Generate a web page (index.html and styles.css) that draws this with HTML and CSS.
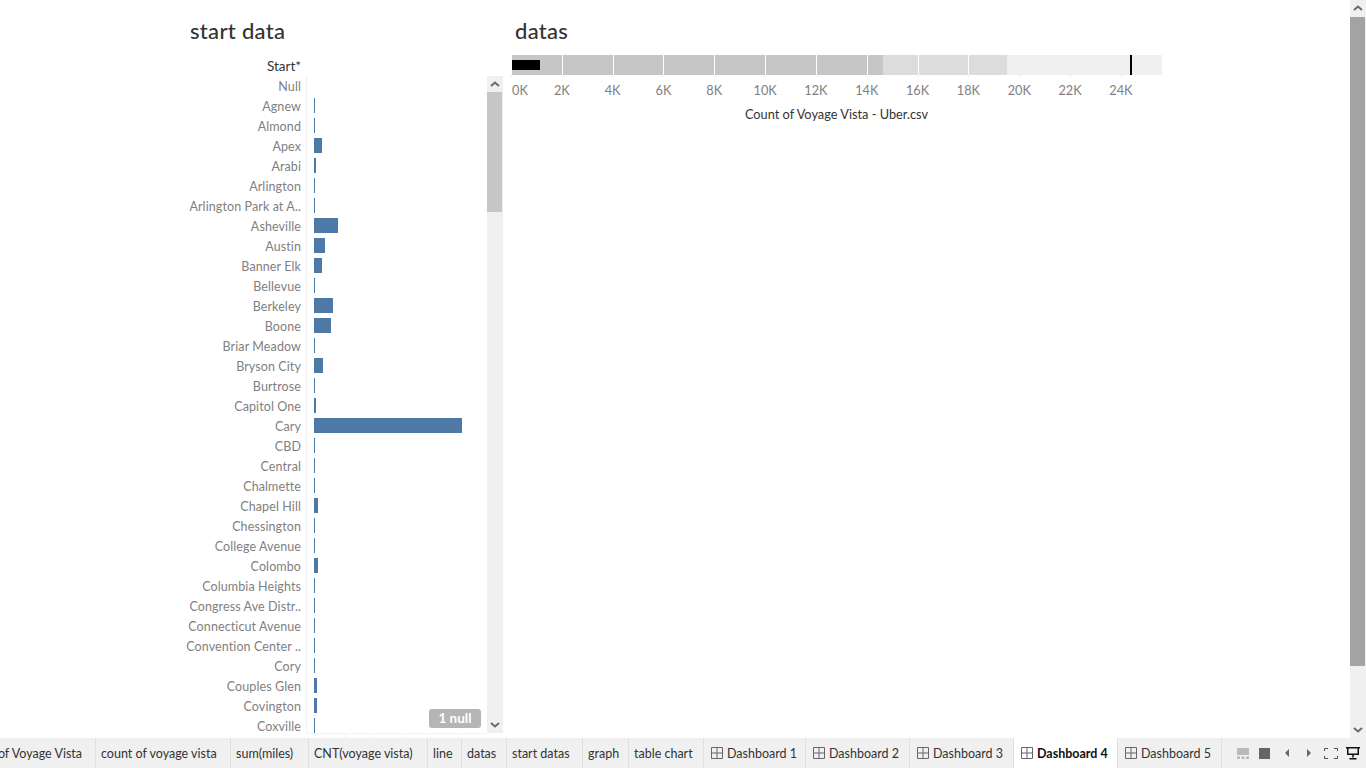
FILE: index.html
```html
<!DOCTYPE html>
<html lang="en">
<head>
<meta charset="UTF-8">
<meta name="viewport" content="width=device-width, initial-scale=1.0">
<title>Dashboard 4</title>
<link rel="stylesheet" href="styles.css">
</head>
<body>

<div class="workspace">
  <div class="dashboard">

    <section class="start-panel">
      <h2 class="sheet-title start-title">start data</h2>
      <div class="field-header">Start*</div>
      <div class="chart-wrap">
        <div class="chart-rows">
          <div class="row"><span class="row-label">Null</span><span class="row-bar"></span></div>
          <div class="row"><span class="row-label">Agnew</span><span class="row-bar"><i class="bar" style="width:1px"></i></span></div>
          <div class="row"><span class="row-label">Almond</span><span class="row-bar"><i class="bar" style="width:1px"></i></span></div>
          <div class="row"><span class="row-label">Apex</span><span class="row-bar"><i class="bar" style="width:8px"></i></span></div>
          <div class="row"><span class="row-label">Arabi</span><span class="row-bar"><i class="bar" style="width:2px"></i></span></div>
          <div class="row"><span class="row-label">Arlington</span><span class="row-bar"><i class="bar" style="width:1px"></i></span></div>
          <div class="row"><span class="row-label">Arlington Park at A..</span><span class="row-bar"><i class="bar" style="width:1px"></i></span></div>
          <div class="row"><span class="row-label">Asheville</span><span class="row-bar"><i class="bar" style="width:24px"></i></span></div>
          <div class="row"><span class="row-label">Austin</span><span class="row-bar"><i class="bar" style="width:11px"></i></span></div>
          <div class="row"><span class="row-label">Banner Elk</span><span class="row-bar"><i class="bar" style="width:8px"></i></span></div>
          <div class="row"><span class="row-label">Bellevue</span><span class="row-bar"><i class="bar" style="width:1px"></i></span></div>
          <div class="row"><span class="row-label">Berkeley</span><span class="row-bar"><i class="bar" style="width:19px"></i></span></div>
          <div class="row"><span class="row-label">Boone</span><span class="row-bar"><i class="bar" style="width:17px"></i></span></div>
          <div class="row"><span class="row-label">Briar Meadow</span><span class="row-bar"><i class="bar" style="width:1px"></i></span></div>
          <div class="row"><span class="row-label">Bryson City</span><span class="row-bar"><i class="bar" style="width:9px"></i></span></div>
          <div class="row"><span class="row-label">Burtrose</span><span class="row-bar"><i class="bar" style="width:1px"></i></span></div>
          <div class="row"><span class="row-label">Capitol One</span><span class="row-bar"><i class="bar" style="width:2px"></i></span></div>
          <div class="row"><span class="row-label">Cary</span><span class="row-bar"><i class="bar" style="width:148px"></i></span></div>
          <div class="row"><span class="row-label">CBD</span><span class="row-bar"><i class="bar" style="width:1px"></i></span></div>
          <div class="row"><span class="row-label">Central</span><span class="row-bar"><i class="bar" style="width:1px"></i></span></div>
          <div class="row"><span class="row-label">Chalmette</span><span class="row-bar"><i class="bar" style="width:1px"></i></span></div>
          <div class="row"><span class="row-label">Chapel Hill</span><span class="row-bar"><i class="bar" style="width:4px"></i></span></div>
          <div class="row"><span class="row-label">Chessington</span><span class="row-bar"><i class="bar" style="width:1px"></i></span></div>
          <div class="row"><span class="row-label">College Avenue</span><span class="row-bar"><i class="bar" style="width:1px"></i></span></div>
          <div class="row"><span class="row-label">Colombo</span><span class="row-bar"><i class="bar" style="width:4px"></i></span></div>
          <div class="row"><span class="row-label">Columbia Heights</span><span class="row-bar"><i class="bar" style="width:1px"></i></span></div>
          <div class="row"><span class="row-label">Congress Ave Distr..</span><span class="row-bar"><i class="bar" style="width:1px"></i></span></div>
          <div class="row"><span class="row-label">Connecticut Avenue</span><span class="row-bar"><i class="bar" style="width:1px"></i></span></div>
          <div class="row"><span class="row-label">Convention Center ..</span><span class="row-bar"><i class="bar" style="width:1px"></i></span></div>
          <div class="row"><span class="row-label">Cory</span><span class="row-bar"><i class="bar" style="width:1px"></i></span></div>
          <div class="row"><span class="row-label">Couples Glen</span><span class="row-bar"><i class="bar" style="width:3px"></i></span></div>
          <div class="row"><span class="row-label">Covington</span><span class="row-bar"><i class="bar" style="width:3px"></i></span></div>
          <div class="row"><span class="row-label">Coxville</span><span class="row-bar"><i class="bar" style="width:1px"></i></span></div>
        </div>
        <div class="null-badge">1 null</div>
        <div class="scrollbar chart-scroll">
          <span class="scroll-btn"><svg width="10" height="6" viewBox="0 0 10 6"><path d="M1 5 L5 1.500 L9 5" fill="none" stroke="#6a6a6a" stroke-width="2"/></svg></span>
          <span class="scroll-thumb"></span>
          <span class="scroll-track"></span>
          <span class="scroll-btn"><svg width="10" height="6" viewBox="0 0 10 6"><path d="M1 1 L5 4.500 L9 1" fill="none" stroke="#6a6a6a" stroke-width="2"/></svg></span>
        </div>
      </div>
      <div class="axis-stubs"><i></i><i></i><i></i><i></i><i></i></div>
    </section>

    <section class="datas-panel">
      <h2 class="sheet-title datas-title">datas</h2>
      <div class="bullet">
        <div class="band band-dark"></div>
        <div class="band band-mid"></div>
        <div class="band band-light"></div>
        <div class="gridlines">
          <i></i><i></i><i></i><i></i><i></i><i></i><i></i><i></i><i></i><i></i>
        </div>
        <div class="measure"></div>
        <div class="ref-line"></div>
      </div>
      <div class="axis-ticks">
        <i></i><i></i><i></i><i></i><i></i><i></i><i></i><i></i><i></i><i></i><i></i><i></i><i></i>
      </div>
      <div class="axis-labels">
        <span class="tick-first">0K</span>
        <span>2K</span><span>4K</span><span>6K</span><span>8K</span><span>10K</span><span>12K</span>
        <span>14K</span><span>16K</span><span>18K</span><span>20K</span><span>22K</span><span>24K</span>
      </div>
      <div class="axis-title">Count of Voyage Vista - Uber.csv</div>
    </section>

  </div>

  <div class="scrollbar page-scroll">
    <span class="scroll-btn"><svg width="10" height="6" viewBox="0 0 10 6"><path d="M1 5 L5 1.500 L9 5" fill="none" stroke="#6a6a6a" stroke-width="2"/></svg></span>
    <span class="scroll-thumb"></span>
    <span class="scroll-track"></span>
    <span class="scroll-btn"><svg width="10" height="6" viewBox="0 0 10 6"><path d="M1 1 L5 4.500 L9 1" fill="none" stroke="#6a6a6a" stroke-width="2"/></svg></span>
  </div>
</div>

<div class="tabbar">
  <div class="tab tab-clipped" style="width:96px">Count of Voyage Vista</div>
  <div class="tab" style="width:135px">count of voyage vista</div>
  <div class="tab" style="width:78px">sum(miles)</div>
  <div class="tab" style="width:119px">CNT(voyage vista)</div>
  <div class="tab" style="width:34px">line</div>
  <div class="tab" style="width:45px">datas</div>
  <div class="tab" style="width:76px">start datas</div>
  <div class="tab" style="width:46px">graph</div>
  <div class="tab" style="width:75px">table chart</div>
  <div class="tab dash-tab" style="width:102px"><svg class="grid-icon" width="12" height="12" viewBox="0 0 12 12"><path d="M.5.5h11v11H.5zM6 .5v11M.5 6h11" fill="none" stroke="#666"/></svg>Dashboard 1</div>
  <div class="tab dash-tab" style="width:104px"><svg class="grid-icon" width="12" height="12" viewBox="0 0 12 12"><path d="M.5.5h11v11H.5zM6 .5v11M.5 6h11" fill="none" stroke="#666"/></svg>Dashboard 2</div>
  <div class="tab dash-tab" style="width:104px"><svg class="grid-icon" width="12" height="12" viewBox="0 0 12 12"><path d="M.5.5h11v11H.5zM6 .5v11M.5 6h11" fill="none" stroke="#666"/></svg>Dashboard 3</div>
  <div class="tab dash-tab tab-active" style="width:104px"><svg class="grid-icon" width="12" height="12" viewBox="0 0 12 12"><path d="M.5.5h11v11H.5zM6 .5v11M.5 6h11" fill="none" stroke="#666"/></svg>Dashboard 4</div>
  <div class="tab dash-tab" style="width:104px"><svg class="grid-icon" width="12" height="12" viewBox="0 0 12 12"><path d="M.5.5h11v11H.5zM6 .5v11M.5 6h11" fill="none" stroke="#666"/></svg>Dashboard 5</div>

  <div class="tab-controls">
    <svg class="ctl-layout" width="12" height="11" viewBox="0 0 12 11"><path d="M0 0h12v7H0zM0 8.500h3V11H0zM4.500 8.500h3V11h-3zM9 8.500h3V11H9z" fill="#b9b9b9"/></svg>
    <svg class="ctl-square" width="11" height="11" viewBox="0 0 11 11"><path d="M0 0h11v11H0z" fill="#666"/></svg>
    <svg class="ctl-prev" width="4" height="8" viewBox="0 0 4 8"><path d="M4 0v8L0 4z" fill="#666"/></svg>
    <svg class="ctl-next" width="4" height="8" viewBox="0 0 4 8"><path d="M0 0v8l4-4z" fill="#666"/></svg>
    <svg class="ctl-full" width="14" height="11" viewBox="0 0 14 11"><path d="M.5 3V.5H4M10 .5h3.500V3M13.500 8v2.500H10M4 10.500H.5V8" fill="none" stroke="#555"/></svg>
    <svg class="ctl-present" width="14" height="13" viewBox="0 0 14 13"><path d="M0 .75h14M1.750 1v6.250h10.500V1M7 8v2.500M3.500 11.750h7" fill="none" stroke="#111" stroke-width="1.500"/></svg>
  </div>
</div>

</body>
</html>
```

FILE: styles.css
```css
html, body {
  margin: 0;
  height: 100%;
}

body {
  width: 1366px;
  height: 768px;
  overflow: hidden;
  background: #fff;
  font-family: 'Lato', 'Liberation Sans', sans-serif;
  font-size: 12.5px;
  color: #333;
  display: flex;
  flex-direction: column;
}

.workspace {
  height: 738px;
  display: flex;
}

.dashboard {
  flex: 1;
  display: flex;
  padding-left: 180px;
}

.sheet-title {
  margin: 0;
  height: 55px;
  padding-top: 18px;
  box-sizing: border-box;
  font-size: 22px;
  line-height: 26px;
  font-weight: 500;
  letter-spacing: 0.3px;
  color: #333;
}

/* start data panel */
.start-panel {
  width: 323px;
  display: flex;
  flex-direction: column;
}

.start-title {
  padding-left: 10px;
}

.field-header {
  height: 21px;
  line-height: 23px;
  width: 121px;
  text-align: right;
  font-size: 13.5px;
  color: #333;
}

.chart-wrap {
  position: relative;
  height: 657px;
  display: flex;
  overflow: hidden;
}

.chart-rows {
  flex: 1;
  overflow: hidden;
}

.row {
  height: 20px;
  display: flex;
}

.row-label {
  width: 121px;
  padding-top: 1px;
  text-align: right;
  line-height: 20px;
  letter-spacing: 0.1px;
  color: #7f7f7f;
  white-space: nowrap;
}

.row-bar {
  margin-left: 5px;
  border-left: 1px solid #f0f0f0;
  padding: 2px 0 3px 7px;
  flex: 1;
}

.bar {
  display: block;
  height: 15px;
  background: #4e79a7;
}

.null-badge {
  position: absolute;
  left: 249px;
  top: 633px;
  width: 52px;
  height: 19px;
  line-height: 19px;
  border-radius: 3px;
  background: #b5b5b5;
  color: #fff;
  font-size: 13.5px;
  font-weight: 700;
  text-align: center;
}

.axis-stubs {
  display: flex;
  margin-left: 126px;
  width: 181px;
  padding-left: 38px;
  box-sizing: border-box;
  border-top: 1px solid #f3f3f3;
}

.axis-stubs i {
  width: 30px;
  height: 4px;
  box-sizing: border-box;
  border-left: 1px solid #f3f3f3;
}

/* scrollbars */
.scrollbar {
  display: flex;
  flex-direction: column;
  width: 16px;
  background: #f0f0f0;
}

.scroll-btn {
  height: 16px;
  flex: none;
  display: flex;
  align-items: center;
  justify-content: center;
}

.scroll-thumb {
  flex: none;
  margin-right: 1px;
}

.scroll-track {
  flex: 1;
}

.chart-scroll .scroll-thumb {
  height: 120px;
  background: #c6c6c6;
}

.page-scroll .scroll-thumb {
  height: 649px;
  margin-top: 1px;
  background: #a3a3a3;
}

/* datas panel */
.datas-panel {
  width: 650px;
  margin-left: 9px;
  display: flex;
  flex-direction: column;
}

.datas-title {
  padding-left: 3px;
}

.bullet {
  position: relative;
  height: 20px;
  display: flex;
  overflow: hidden;
}

.band-dark {
  width: 371px;
  background: #c6c6c6;
}

.band-mid {
  width: 124px;
  background: #dcdcdc;
}

.band-light {
  flex: 1;
  background: #f0f0f0;
}

.gridlines {
  position: absolute;
  inset: 0 0 0 -1px;
  display: flex;
}

.gridlines i, .axis-ticks i {
  flex: none;
  width: 50.83px;
  box-sizing: border-box;
  border-left: 1px solid #fff;
}

.gridlines i:first-child {
  border-left-color: transparent;
}

.measure {
  position: absolute;
  left: 0;
  top: 5px;
  width: 28px;
  height: 10px;
  background: #000;
}

.ref-line {
  position: absolute;
  left: 618px;
  top: 0;
  width: 2px;
  height: 20px;
  background: #000;
}

.axis-ticks {
  display: flex;
  height: 2px;
  margin-left: -1px;
}

.axis-ticks i {
  border-left-color: #eee;
}

.axis-labels {
  display: flex;
  height: 25px;
  padding-top: 6px;
  margin-left: -1px;
  box-sizing: border-box;
  line-height: 15px;
  font-size: 12.75px;
  color: #7f7f7f;
}

.axis-labels span {
  flex: none;
  width: 50.83px;
  text-align: center;
}

.axis-labels .tick-first {
  width: 25.4px;
  padding-left: 1px;
  box-sizing: border-box;
  text-align: left;
}

.axis-title {
  margin-top: 5px;
  line-height: 15px;
  font-size: 12.75px;
  text-align: center;
  width: 649px;
  color: #333;
}

/* sheet tabs */
.tabbar {
  height: 30px;
  background: #f0f0f0;
  display: flex;
}

.tab {
  flex: none;
  box-sizing: border-box;
  padding-top: 1px;
  padding-left: 5px;
  border-right: 1px solid #e0e0e0;
  line-height: 29px;
  white-space: nowrap;
  overflow: hidden;
}

.tab-clipped {
  padding: 1px 13px 0 0;
  direction: rtl;
}

.dash-tab {
  display: flex;
  align-items: center;
  padding-left: 7px;
}

.grid-icon {
  margin: -1px 4px 0 0;
  flex: none;
}

.tab-active {
  background: #fff;
  font-weight: 700;
  color: #111;
}

.tab-controls {
  flex: 1;
  display: flex;
  align-items: center;
  padding-left: 15px;
}

.ctl-square {
  margin-left: 10px;
}

.ctl-prev {
  margin-left: 15px;
}

.ctl-next {
  margin-left: 18px;
}

.ctl-full {
  margin-left: 13px;
}

.ctl-present {
  margin-left: 8px;
}
```
